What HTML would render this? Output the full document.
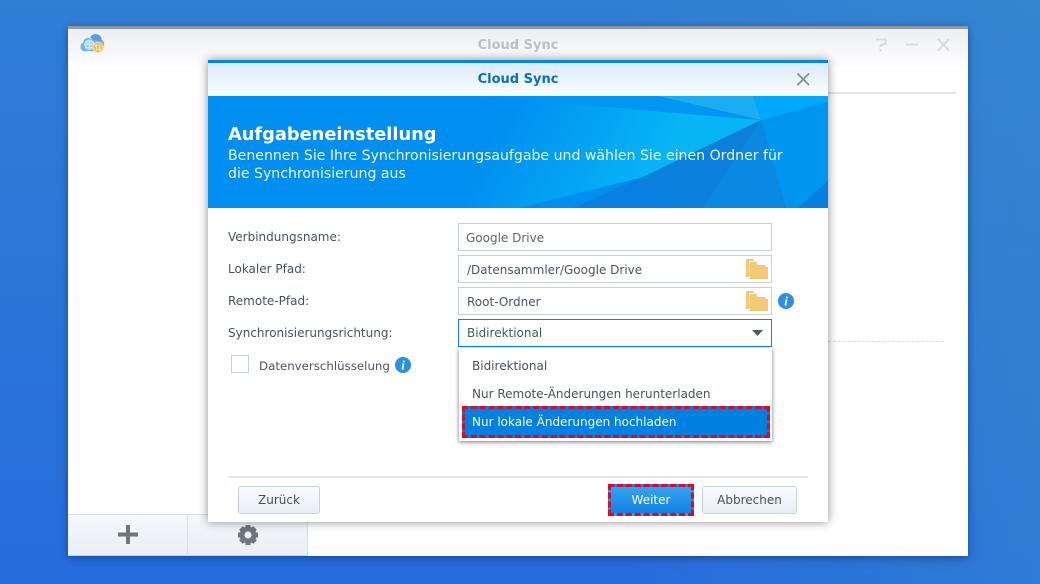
<!DOCTYPE html>
<html><head><meta charset="utf-8">
<style>
html,body{margin:0;padding:0;width:1040px;height:584px;overflow:hidden}
body{position:relative;background:#2f78d2;font-family:"DejaVu Sans","Liberation Sans",sans-serif;font-size:12px;color:#444e5a}
div{box-sizing:border-box}
.a{position:absolute;white-space:nowrap}
.inp{position:absolute;left:458px;width:314px;height:28px;border:1px solid #c6d0dc;background:#fff;line-height:29px;padding-left:8px;color:#4b5560}
.lb{position:absolute;left:228px;white-space:nowrap;color:#48525e;line-height:16px}
.btn{position:absolute;top:486px;height:28px;border:1px solid #c5d2e0;border-radius:3px;background:linear-gradient(#fafcfe,#e9eff6);text-align:center;line-height:27px;color:#45505c}
</style></head><body>
<svg class="a" style="left:0;top:0" width="1040" height="584">
<defs><linearGradient id="bg" x1="0" y1="0" x2="0" y2="1"><stop offset="0" stop-color="#2f7fd5"/><stop offset="1" stop-color="#276cdd"/></linearGradient>
<linearGradient id="bgr" x1="0" y1="0" x2="1" y2="0"><stop offset="0.6" stop-color="#3a8ec8" stop-opacity="0"/><stop offset="1" stop-color="#3a8ec8" stop-opacity=".45"/></linearGradient>
<linearGradient id="ray" gradientUnits="userSpaceOnUse" x1="300" y1="10" x2="440" y2="85"><stop offset="0" stop-color="#008ff0"/><stop offset="1" stop-color="#07b4f6"/></linearGradient></defs>
<rect width="1040" height="584" fill="url(#bg)"/>
<rect width="1040" height="584" fill="url(#bgr)"/>
</svg>

<!-- main window -->
<div class="a" style="left:68px;top:26px;width:900px;height:530px;background:#fff;box-shadow:0 2px 8px rgba(10,40,100,.55);border-top:3px solid #8f99a6">
  <div class="a" style="left:0;top:0;width:900px;height:37px;background:linear-gradient(#eceef1,#fdfdfe)"></div>
  <div class="a" style="left:0;width:900px;top:9px;text-align:center;font-weight:bold;font-size:13px;line-height:16px;color:#bcc1c7">Cloud Sync</div>
</div>
<svg class="a" style="left:79px;top:33px" width="26" height="24" viewBox="-1 4 30 27.7">
  <path d="M5 25 C0 25 -1 17 4 15 C4 10 10 8 13 11 C15 5 24 6 25 12 C29 13 29 20 26 21 L20 25Z" fill="#6fb6ec"/>
  <path d="M12 9 C14 4 23 4 25 10 L25 14 L16 12Z" fill="#5c9bdc"/>
  <circle cx="11" cy="17.5" r="5.5" fill="#a9d3f4" stroke="#e6f3fd" stroke-width=".8"/>
  <path d="M5.5 17.5H16.500M11 12V23M7 14.500H15M7 20.500H15" stroke="#e6f3fd" stroke-width=".7" fill="none"/>
  <circle cx="21" cy="20.500" r="6" fill="#f6bd5e" stroke="#fbe6c0" stroke-width=".8"/>
  <path d="M19 24V17.500M17.800 19L19 17.500L20.200 19M23 17.500V24M21.800 22.500L23 24L24.200 22.500" stroke="#fff" stroke-width=".9" fill="none"/>
</svg>
<svg class="a" style="left:870px;top:35px" width="85" height="20" fill="none" stroke="#d8d9db" stroke-width="1.800">
  <path d="M6 4.500H15.500V8.500L10.500 10.500V12M10.500 14V16.500"/>
  <path d="M36 9.500H48"/>
  <path d="M68 4L79 15.500M79 4L68 15.500"/>
</svg>
<div class="a" style="left:828px;top:92px;width:128px;height:2px;background:#e2e3e5"></div>
<div class="a" style="left:828px;top:341px;width:116px;border-top:1px dashed #dcdde0"></div>

<!-- bottom toolbar -->
<div class="a" style="left:68px;top:514px;width:240px;height:42px;background:linear-gradient(#f5f8fb,#e9eff6);border-top:1px solid #d6dfe9;border-right:1px solid #d6dfe9;border-bottom:1px solid #cfcfd2"></div>
<div class="a" style="left:187px;top:514px;width:1px;height:42px;background:#d6dfe9"></div>
<svg class="a" style="left:117px;top:524px" width="22" height="22"><path d="M1 10.500H21M11 1V20" stroke="#6e757c" stroke-width="4"/></svg>
<svg class="a" style="left:237px;top:524px" width="22" height="22" viewBox="0 0 22 22">
  <circle cx="11" cy="11" r="6.200" fill="none" stroke="#6e757c" stroke-width="4.600"/>
  <g fill="#6e757c">
    <rect x="8.500" y="1" width="5" height="20"/>
    <rect x="8.500" y="1" width="5" height="20" transform="rotate(45 11 11)"/>
    <rect x="8.500" y="1" width="5" height="20" transform="rotate(90 11 11)"/>
    <rect x="8.500" y="1" width="5" height="20" transform="rotate(135 11 11)"/>
  </g>
  <circle cx="11" cy="11" r="3.500" fill="#eff3f8"/>
</svg>

<!-- dialog -->
<div class="a" style="left:208px;top:60px;width:620px;height:462px;background:#fff;box-shadow:0 0 9px rgba(0,0,0,.45);border-top:3px solid #0086e6"></div>
<div class="a" style="left:208px;top:63px;width:620px;height:33px;background:linear-gradient(#dcebf9,#fbfdfe)"></div>
<div class="a" style="left:208px;top:72px;width:620px;text-align:center;font-weight:bold;font-size:13px;color:#0a6fc4;line-height:16px;">Cloud Sync</div>
<svg class="a" style="left:796px;top:72px" width="15" height="15"><path d="M1.500 1.500L13 13M13 1.500L1.500 13" stroke="#878f97" stroke-width="1.800" fill="none"/></svg>

<!-- banner -->
<svg class="a" style="left:208px;top:96px" width="620" height="112" viewBox="0 0 620 112">
  <rect width="620" height="112" fill="#008ff0"/>
  <polygon points="270,0 553,24 435,81 310,112 240,112" fill="url(#ray)"/>
  <polygon points="270,0 450,0 553,24" fill="#0096f2"/>
  <polygon points="450,0 545,0 553,24" fill="#1cacf2"/>
  <polygon points="545,0 620,0 620,6 553,24" fill="#00a8fa"/>
  <polygon points="553,24 620,6 620,85 590,112 578,112" fill="#0095ee"/>
  <polygon points="553,24 435,81 465,112 578,112" fill="#0a80dc"/>
  <polygon points="553,24 495,112 578,112" fill="#0a88e2"/>
  <polygon points="435,81 465,112 365,112" fill="#0880e2"/>
  <polygon points="620,85 620,112 590,112" fill="#0580dc"/>
</svg>
<div class="a" style="left:228px;top:124px;font-weight:bold;font-size:17.800px;line-height:22px;color:#fff">Aufgabeneinstellung</div>
<div class="a" style="left:228px;top:147px;font-size:14.100px;line-height:18px;color:#eef7fe">Benennen Sie Ihre Synchronisierungsaufgabe und wählen Sie einen Ordner für<br>die Synchronisierung aus</div>

<!-- form -->
<div class="lb" style="top:229px">Verbindungsname:</div>
<div class="lb" style="top:261px">Lokaler Pfad:</div>
<div class="lb" style="top:293px">Remote-Pfad:</div>
<div class="lb" style="top:325px">Synchronisierungsrichtung:</div>
<div class="inp" style="top:223px;padding-left:7px;color:#5c6570">Google Drive</div>
<div class="inp" style="top:255px">/Datensammler/Google Drive</div>
<div class="inp" style="top:287px">Root-Ordner</div>
<div class="inp" style="top:319px;border-color:#0a86e2;line-height:27px">Bidirektional</div>
<svg class="a" style="left:745px;top:258px" width="24" height="22"><path d="M1 1H8L9.500 3H4V19H1Z" fill="#f3c877"/><path d="M4.500 4H11L13 7H20V8.500H23V21H4.500Z" fill="#f3c877"/></svg>
<svg class="a" style="left:745px;top:290px" width="24" height="22"><path d="M1 1H8L9.500 3H4V19H1Z" fill="#f3c877"/><path d="M4.500 4H11L13 7H20V8.500H23V21H4.500Z" fill="#f3c877"/></svg>
<svg class="a" style="left:778px;top:293px" width="16" height="16"><circle cx="8" cy="8" r="8" fill="#2b8fe6"/><text x="8" y="12.500" text-anchor="middle" font-family="Liberation Serif" font-style="italic" font-weight="bold" font-size="13" fill="#fff">i</text></svg>
<svg class="a" style="left:395px;top:357px" width="16" height="16"><circle cx="8" cy="8" r="8" fill="#2b8fe6"/><text x="8" y="12.500" text-anchor="middle" font-family="Liberation Serif" font-style="italic" font-weight="bold" font-size="13" fill="#fff">i</text></svg>
<svg class="a" style="left:752px;top:330px" width="12" height="7"><path d="M0 0H11L5.500 6Z" fill="#4f5861"/></svg>
<div class="a" style="left:231px;top:355px;width:18px;height:18px;border:1px solid #c6d0dc;background:#fff"></div>
<div class="lb" style="left:259px;top:358px;color:#4d545c;font-size:11.800px">Datenverschlüsselung</div>

<!-- dropdown -->
<div class="a" style="left:459px;top:348px;width:313px;height:93px;background:#fff;box-shadow:0 1px 4px rgba(0,0,0,.55)"></div>
<div class="lb" style="left:472px;top:358px">Bidirektional</div>
<div class="lb" style="left:472px;top:386px">Nur Remote-Änderungen herunterladen</div>
<div class="a" style="left:462px;top:406px;width:308px;height:32px;background:#0080e0;border:3px dashed #ee0022;line-height:26px;padding-left:7px;color:#fff">Nur lokale Änderungen hochladen</div>

<!-- footer -->
<div class="a" style="left:228px;top:476px;width:580px;height:2px;background:#e4e5e7"></div>
<div class="btn" style="left:238px;width:82px">Zurück</div>
<div class="a" style="left:608px;top:484px;width:86px;height:32px;background:linear-gradient(#38a2f2,#0f82e4);border:3px dashed #ee0022;text-align:center;line-height:26px;color:#fff">Weiter</div>
<div class="btn" style="left:702px;width:95px">Abbrechen</div>
</body></html>
